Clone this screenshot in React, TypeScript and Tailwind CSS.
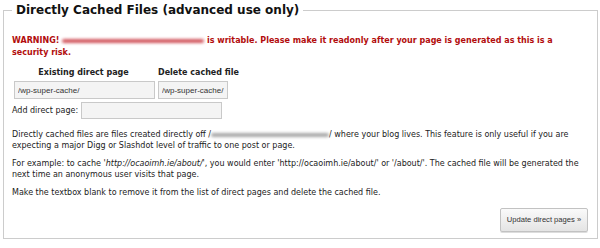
import React from 'react';

const body = { fontFamily: '"DejaVu Sans", Verdana, sans-serif' };
const field = { fontFamily: '"Liberation Sans", Arial, sans-serif' };

function Smudge({ color, width }: { color: string; width: number }) {
  return (
    <span className="relative inline-block h-[6px] align-middle" style={{ width }}>
      <span className={`absolute inset-x-0 top-[1px] h-[4px] rounded-full blur-[1.5px] ${color}`} />
    </span>
  );
}

export default function App() {
  return (
    <div className="w-[600px] h-[248px] bg-white pt-[4px] pl-[3px]" style={body}>
      <fieldset className="w-[595px] h-[235px] border border-[#cccccc] pl-[8px] pr-[9px] m-0">
        <legend className="px-[4px] text-[12px] font-bold leading-[13px] text-[#111]">
          Directly Cached Files (advanced use only)
        </legend>

        <p className="mt-[18px] text-[8px] leading-[12px] font-bold text-[#b20d0d]">
          WARNING! <Smudge color="bg-[#d2575f]" width={142} /> is writable. Please make it readonly after your page is
          generated as this is a security risk.
        </p>

        <div className="mt-[8px] grid grid-cols-[143px_auto] gap-x-[3px] gap-y-[2px] w-max text-[8px] text-[#222]">
          <div className="font-bold text-center leading-[12px]">Existing direct page</div>
          <div className="font-bold text-center leading-[12px]">Delete cached file</div>
          <input
            readOnly
            value="/wp-super-cache/"
            className="block w-[141px] h-[18px] ml-[2px] border border-[#c9c9c9] bg-[#f4f4f4] px-[3px] text-[8px] text-[#333]"
            style={field}
          />
          <input
            readOnly
            value="/wp-super-cache/"
            className="block w-[70px] h-[18px] border border-[#c9c9c9] bg-[#f4f4f4] px-[3px] text-[8px] text-[#333]"
            style={field}
          />
        </div>

        <div className="flex items-center gap-[3px] mt-[3px] text-[8px] text-[#222]">
          <span>Add direct page:</span>
          <input
            className="block w-[141px] h-[17px] border border-[#c9c9c9] bg-[#f4f4f4] px-[3px] text-[8px]"
            style={field}
          />
        </div>

        <div className="mt-[10px] text-[8px] leading-[11px] text-[#222] space-y-[7px]">
          <p>
            Directly cached files are files created directly off /<Smudge color="bg-[#a9a9a9]" width={118} />/ where
            your blog lives. This feature is only useful if you are expecting a major Digg or Slashdot level of traffic
            to one post or page.
          </p>
          <p>
            For example: to cache '<em>http://ocaoimh.ie/about/</em>', you would enter 'http://ocaoimh.ie/about/' or
            '/about/'. The cached file will be generated the next time an anonymous user visits that page.
          </p>
          <p>Make the textbox blank to remove it from the list of direct pages and delete the cached file.</p>
        </div>

        <div className="flex justify-end mt-[10px]">
          <button
            className="w-[88px] h-[24px] border border-[#c2c2c2] rounded-[2px] bg-gradient-to-b from-[#fafafa] to-[#e4e4e4] text-[7.6px] text-[#333] shadow-[0_1px_0_#ddd]"
            style={field}
          >
            Update direct pages »
          </button>
        </div>
      </fieldset>
    </div>
  );
}
